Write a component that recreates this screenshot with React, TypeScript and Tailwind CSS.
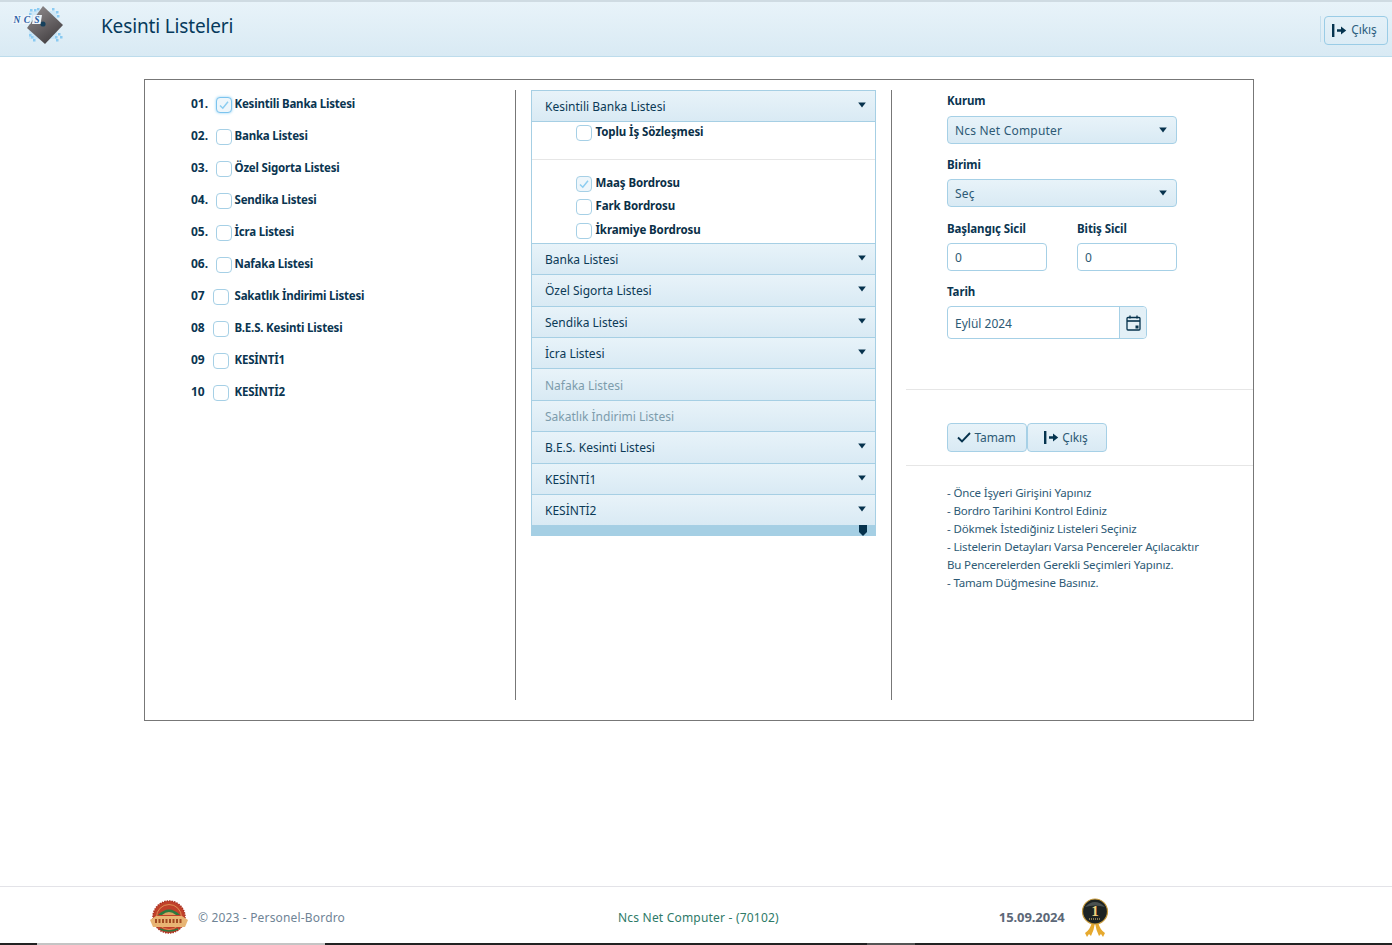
import React from "react";

const font = { fontFamily: '"Noto Sans", "Open Sans", sans-serif' };

function Check({ checked, focus, className = "" }: { checked?: boolean; focus?: boolean; className?: string }) {
  return (
    <span className={`flex h-4 w-4 shrink-0 items-center justify-center rounded-[4px] border ${focus ? "border-[#7cc4ee] shadow-[0_0_3px_#8fd0f5]" : "border-[#a6d0e6]"} ${checked ? "bg-[#eef6fb]" : "bg-white"} ${className}`}>
      {checked && (
        <svg width="12" height="12" viewBox="0 0 12 12" fill="none" stroke="#8ccdf0" strokeWidth="1.5">
          <path d="M2 6.5 L4.8 9.2 L10 2.8" />
        </svg>
      )}
    </span>
  );
}

function Caret({ className = "" }: { className?: string }) {
  return (
    <svg width="8" height="6" viewBox="0 0 8 6" className={className}>
      <path d="M0.2 0.5 H7.8 L4 5.5 Z" fill="#06324d" />
    </svg>
  );
}

function ExitIcon() {
  return (
    <svg width="15" height="13" viewBox="0 0 15 13" fill="#05344f">
      <rect x="0" y="0" width="2.4" height="13" />
      <path d="M5 5.3 H9 V2.6 L14.2 6.5 L9 10.4 V7.7 H5 Z" />
    </svg>
  );
}

const dots: [number, number][] = [
  [19, 6], [23, 6], [41, 5], [45, 8], [18, 10], [46, 12], [49, 33], [45, 36],
  [18, 31], [22, 36], [47, 30], [44, 33], [26, 5], [20, 33],
];

function NcsLogo() {
  return (
    <svg width="54" height="44" viewBox="0 0 54 44" className="shrink-0">
      <defs>
        <linearGradient id="disc" x1="0.2" y1="0" x2="0.8" y2="1">
          <stop offset="0" stopColor="#8f8a8c" />
          <stop offset="1" stopColor="#3f3b3d" />
        </linearGradient>
      </defs>
      {dots.map(([x, y]) => (
        <rect key={`${x}-${y}`} x={x} y={y} width="2.5" height="2.5" fill="#6cbdf0" opacity="0.75" />
      ))}
      <path d="M18 8 H46 V36 H18 Z" fill="#9fd4f5" opacity="0.3" />
      <path d="M32 3 L52 22 L34 41 L16 25 Z" fill="url(#disc)" />
      <circle cx="32" cy="21" r="2.6" fill="#16405c" />
      <path d="M2.5 12 H11 L9.5 21 H1 Z M12.5 12 H21 L19.5 21 H11 Z M22.5 12 H31 L29.5 21 H21 Z" fill="#eef5fa" />
      <text x="6" y="20" textAnchor="middle" fill="#2b5da5" fontSize="9.5" fontStyle="italic" fontWeight="700" fontFamily="Liberation Serif, serif">N</text>
      <text x="16" y="20" textAnchor="middle" fill="#2b5da5" fontSize="9.5" fontStyle="italic" fontWeight="700" fontFamily="Liberation Serif, serif">C</text>
      <text x="26" y="20" textAnchor="middle" fill="#2b5da5" fontSize="9.5" fontStyle="italic" fontWeight="700" fontFamily="Liberation Serif, serif">S</text>
    </svg>
  );
}

function OtaLogo() {
  return (
    <svg width="40" height="36" viewBox="0 0 40 36" className="shrink-0">
      <circle cx="20" cy="17" r="16" fill="#c0402a" stroke="#a9301f" strokeWidth="1.5" strokeDasharray="1.5 1" />
      <circle cx="20" cy="17" r="12.5" fill="none" stroke="#e3a35d" strokeWidth="0.8" />
      <path d="M9 15 Q20 4 31 15 Z" fill="#2c7a3f" />
      <path d="M13 15 Q20 9 27 15 Z" fill="#dba261" />
      <path d="M1 20 L7 16 L33 16 L39 20 L36 27 L4 27 Z" fill="#e8b574" />
      <path d="M6 21 H34" stroke="#a14a22" strokeWidth="4" strokeDasharray="2 1.5" />
      <path d="M11 29 Q20 33 29 29" stroke="#2c7a3f" strokeWidth="1.5" fill="none" />
    </svg>
  );
}

function Medal() {
  return (
    <svg width="28" height="40" viewBox="0 0 28 40" className="shrink-0">
      <path d="M11 24 Q9 32 4 35 L6 39 L8 36 L10 38 Q13 32 14 25 Z" fill="#e6a92f" />
      <path d="M17 24 Q19 32 24 35 L22 39 L20 36 L18 38 Q15 32 14 25 Z" fill="#e6a92f" />
      <circle cx="14" cy="13.5" r="12.5" fill="#1d2322" stroke="#c79a3c" strokeWidth="1.2" />
      <path d="M4 9 Q14 -1 24 9 Q14 6 4 9 Z" fill="#4a5150" />
      <text x="14" y="18" textAnchor="middle" fill="#f0cf7a" fontSize="15" fontWeight="700" fontFamily="Liberation Serif, serif">1</text>
      <path d="M8 21 H20" stroke="#f0cf7a" strokeWidth="1" strokeDasharray="1 1" />
    </svg>
  );
}

const left: [string, string, boolean][] = [
  ["01.", "Kesintili Banka Listesi", false],
  ["02.", "Banka Listesi", false],
  ["03.", "Özel Sigorta Listesi", false],
  ["04.", "Sendika Listesi", false],
  ["05.", "İcra Listesi", false],
  ["06.", "Nafaka Listesi", false],
  ["07", "Sakatlık İndirimi Listesi", true],
  ["08", "B.E.S. Kesinti Listesi", true],
  ["09", "KESİNTİ1", true],
  ["10", "KESİNTİ2", true],
];

const grad = "bg-gradient-to-b from-[#e8f3f9] to-[#d9eaf4]";

function AccHeader({ label, disabled, h = "h-[31.4px]" }: { label: string; disabled?: boolean; h?: string }) {
  return (
    <div className={`flex ${h} items-center justify-between border-b border-[#a6cfe4] ${grad} pl-[13px] pr-[9px]`}>
      <span className={`relative top-[1px] text-[12px] ${disabled ? "text-[#7d9cac]" : "text-[#0b3a56]"}`}>{label}</span>
      {!disabled && <Caret className="-mt-[2px]" />}
    </div>
  );
}

function SubRow({ label, checked, className = "" }: { label: string; checked?: boolean; className?: string }) {
  return (
    <div className={`flex h-4 items-center gap-[3.5px] pl-[44px] ${className}`}>
      <Check checked={checked} />
      <span className="relative -top-[1px] text-[11.5px] font-bold leading-[16px] tracking-[-0.1px] text-[#0a2f47]">{label}</span>
    </div>
  );
}

function Select({ value, mb }: { value: string; mb: string }) {
  return (
    <div className={`flex h-7 w-[230px] items-center justify-between rounded-[4px] border border-[#a6d0e6] ${grad} pl-[7px] pr-[9px] ${mb}`}>
      <span className="relative top-[1px] text-[12px] tracking-[0.2px] text-[#2d5a75]">{value}</span>
      <Caret />
    </div>
  );
}

function Label({ children, className = "" }: { children: React.ReactNode; className?: string }) {
  return <div className={`text-[11.5px] font-bold leading-[16px] tracking-[-0.1px] text-[#0a3551] ${className}`}>{children}</div>;
}

export default function App() {
  return (
    <div style={font} className="flex h-[945px] flex-col overflow-hidden bg-white">
      <header className={`flex h-[57px] shrink-0 items-center border-b border-[#bddcec] border-t-2 border-t-[#cfdbe2] ${grad} pl-[11px] pr-[4px]`}>
        <div className="-mt-[8px]"><NcsLogo /></div>
        <h1 className="ml-[36px] -mt-[6px] text-[19px] font-normal tracking-[-0.15px] text-[#063a5c]">Kesinti Listeleri</h1>
        <div className="ml-auto flex items-center">
          <span className="mr-[3px] h-[26px] w-px bg-[#c5dfee]" />
          <button className="mt-[2px] flex h-[29px] w-[64px] items-center justify-center gap-[4px] rounded-[4px] border border-[#9accE6] pr-[3px] text-[12px] tracking-[-0.1px] text-[#2d5f7f]">
            <ExitIcon />Çıkış
          </button>
        </div>
      </header>

      <main className="ml-[144px] mt-[22px] flex h-[642px] w-[1110px] shrink-0 border border-[#777] pb-[20px] pt-[10px]">
        <section className="flex w-[371px] shrink-0 flex-col border-r border-[#777] pl-[46px]">
          {left.map(([n, l, narrow]) => (
            <div key={n} className="-mt-[1px] mb-[1px] flex h-8 items-center">
              <span className={`relative -top-[1px] ${narrow ? "w-[22px]" : "w-[25px]"} text-[12px] font-bold text-[#0a3551]`}>{n}</span>
              <Check checked={n === "01."} focus={n === "01."} />
              <span className={`relative -top-[1px] ${narrow ? "ml-[5.5px]" : "ml-[2.5px]"} text-[11.5px] font-bold tracking-[-0.2px] text-[#0a3551]`}>{l}</span>
            </div>
          ))}
        </section>

        <section className="ml-[15px] w-[345px] shrink-0 self-start">
          <div className="border-x border-t border-[#a6cfe4]">
            <AccHeader label="Kesintili Banka Listesi" h="h-[31px]" />
            <div className="h-[121.8px] border-b border-[#a6cfe4] bg-white">
              <SubRow label="Toplu İş Sözleşmesi" className="pt-0 translate-y-[3px]" />
              <div className="mt-[21px] border-t border-[#e6e6e6]" />
              <SubRow label="Maaş Bordrosu" checked className="mt-[16px]" />
              <SubRow label="Fark Bordrosu" className="mt-[7px]" />
              <SubRow label="İkramiye Bordrosu" className="mt-[8px]" />
            </div>
            <AccHeader label="Banka Listesi" />
            <AccHeader label="Özel Sigorta Listesi" />
            <AccHeader label="Sendika Listesi" />
            <AccHeader label="İcra Listesi" />
            <AccHeader label="Nafaka Listesi" disabled />
            <AccHeader label="Sakatlık İndirimi Listesi" disabled />
            <AccHeader label="B.E.S. Kesinti Listesi" />
            <AccHeader label="KESİNTİ1" />
            <AccHeader label="KESİNTİ2" />
          </div>
          <div className="relative h-[10px] bg-[#a5cfe4]">
            <svg width="8" height="11" viewBox="0 0 8 11" className="absolute right-[9px] -top-[1px]">
              <path d="M0 0 H8 V7 L4 11 L0 7 Z" fill="#06324d" />
            </svg>
          </div>
        </section>

        <section className="ml-[15px] flex flex-1 border-l border-[#777]">
          <div className="ml-[14px] flex-1">
            <div className="pl-[41px] pt-[4px]">
              <Label className="mb-[7px] -mt-[1px] translate-y-[0px]">Kurum</Label>
              <Select value="Ncs Net Computer" mb="mb-[13px]" />
              <Label className="mb-[6px]">Birimi</Label>
              <Select value="Seç" mb="mb-[14px]" />
              <div className="flex gap-[30px]">
                <div className="w-[100px]">
                  <Label className="mb-[6px]">Başlangıç Sicil</Label>
                  <div className="flex h-7 items-center rounded-[4px] border border-[#a6d0e6] pl-[7px] pt-[2px] text-[12px] text-[#2d5a75]">0</div>
                </div>
                <div className="w-[100px]">
                  <Label className="mb-[6px]">Bitiş Sicil</Label>
                  <div className="flex h-7 items-center rounded-[4px] border border-[#a6d0e6] pl-[7px] pt-[2px] text-[12px] text-[#2d5a75]">0</div>
                </div>
              </div>
              <Label className="mb-[6px] mt-[13px]">Tarih</Label>
              <div className="flex h-[33px] w-[200px] rounded-[4px] border border-[#a6d0e6]">
                <div className="flex flex-1 items-center pl-[7px] pt-[2px] text-[12px] text-[#2d5a75]">Eylül 2024</div>
                <div className="flex w-[27px] items-center justify-center rounded-r-[4px] border-l border-[#a6d0e6] bg-[#e3f0f7]">
                  <svg width="15" height="16" viewBox="0 0 15 16" fill="none" stroke="#06324d" strokeWidth="1.3">
                    <rect x="1" y="2.5" width="13" height="12.5" rx="1" />
                    <path d="M1 6 H14" strokeWidth="1.6" />
                    <path d="M4 0.5 V3.5 M11 0.5 V3.5" />
                    <rect x="9.5" y="10.5" width="3" height="3" fill="#06324d" stroke="none" />
                  </svg>
                </div>
              </div>
            </div>
            <div className="mt-[50px] border-t border-[#e6e6e6]" />
            <div className="flex pl-[41px] pt-[33px]">
              <button className={`flex h-[29px] w-[80px] items-center justify-center gap-[3px] rounded-[4px] border border-[#a6d0e6] ${grad} pr-[1px] text-[12px] tracking-[-0.1px] text-[#2d5a75]`}>
                <svg width="14" height="11" viewBox="0 0 14 11" fill="none" stroke="#06324d" strokeWidth="1.9"><path d="M1 5.5 L5 9.5 L13 1" /></svg>
                Tamam
              </button>
              <button className={`flex h-[29px] w-[80px] items-center justify-center gap-[3px] rounded-[4px] border border-[#a6d0e6] ${grad} pr-[2px] text-[12px] tracking-[-0.1px] text-[#2d5a75]`}>
                <ExitIcon />Çıkış
              </button>
            </div>
            <div className="mt-[13px] border-t border-[#e6e6e6]" />
            <div className="pl-[41px] pt-[18px] text-[11.5px] leading-[18px] tracking-[-0.15px] text-[#2d5a75]">
              <div>- Önce İşyeri Girişini Yapınız</div>
              <div>- Bordro Tarihini Kontrol Ediniz</div>
              <div>- Dökmek İstediğiniz Listeleri Seçiniz</div>
              <div>- Listelerin Detayları Varsa Pencereler Açılacaktır</div>
              <div>Bu Pencerelerden Gerekli Seçimleri Yapınız.</div>
              <div>- Tamam Düğmesine Basınız.</div>
            </div>
          </div>
        </section>
      </main>

      <footer className="mt-[165px] flex h-[57px] shrink-0 items-center border-t border-[#e3e3e8] pl-[149px] pt-[6px]">
        <OtaLogo />
        <span className="ml-[9px] text-[12px] tracking-[0.17px] text-[#6f8496]">© 2023 - Personel-Bordro</span>
        <span className="ml-[273px] text-[12px] tracking-[0.2px] text-[#2e7a68]">Ncs Net Computer - (70102)</span>
        <span className="ml-[220px] text-[13px] font-bold tracking-[-0.1px] text-[#5c6878]">15.09.2024</span>
        <span className="ml-[16px]"><Medal /></span>
      </footer>

      <div className="flex h-[2px] shrink-0 bg-[#222]">
        <span className="ml-[37px] w-[288px] bg-[#c4c4c4]" />
        <span className="ml-[542px] w-[48px] bg-[#555]" />
      </div>
    </div>
  );
}
